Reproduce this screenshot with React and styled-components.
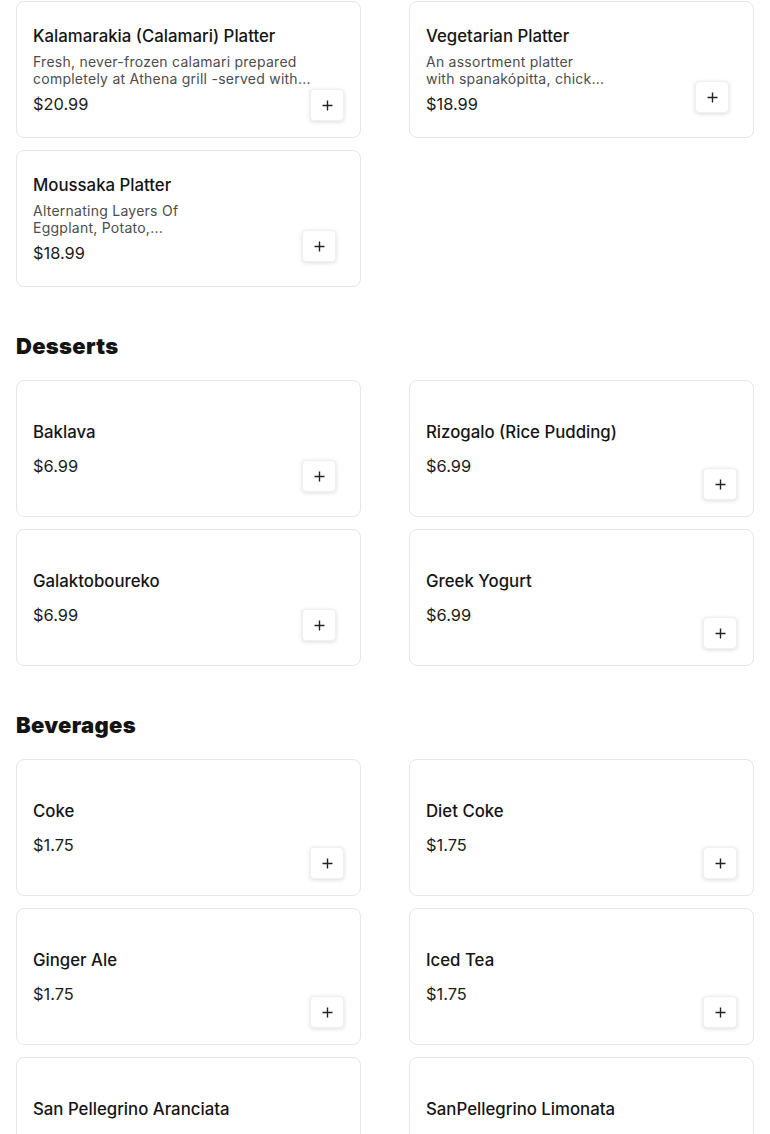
import React from 'react';
import styled, { createGlobalStyle } from 'styled-components';

const sections = [
  {
    id: 'platters',
    title: null,
    items: [
      {
        name: 'Kalamarakia (Calamari) Platter',
        desc: ['Fresh, never-frozen calamari prepared', 'completely at Athena grill -served with...'],
        price: '$20.99',
        inset: 17,
      },
      {
        name: 'Vegetarian Platter',
        desc: ['An assortment platter', 'with spanakópitta, chick...'],
        price: '$18.99',
        inset: 25,
      },
      {
        name: 'Moussaka Platter',
        desc: ['Alternating Layers Of', 'Eggplant, Potato,...'],
        price: '$18.99',
        inset: 25,
      },
    ],
  },
  {
    id: 'desserts',
    title: 'Desserts',
    items: [
      { name: 'Baklava', price: '$6.99', inset: 25 },
      { name: 'Rizogalo (Rice Pudding)', price: '$6.99', inset: 17 },
      { name: 'Galaktoboureko', price: '$6.99', inset: 25 },
      { name: 'Greek Yogurt', price: '$6.99', inset: 17 },
    ],
  },
  {
    id: 'beverages',
    title: 'Beverages',
    items: [
      { name: 'Coke', price: '$1.75', inset: 17 },
      { name: 'Diet Coke', price: '$1.75', inset: 17 },
      { name: 'Ginger Ale', price: '$1.75', inset: 17 },
      { name: 'Iced Tea', price: '$1.75', inset: 17 },
      { name: 'San Pellegrino Aranciata', price: '$1.75', inset: 17 },
      { name: 'SanPellegrino Limonata', price: '$1.75', inset: 17 },
    ],
  },
];

const PlusIcon = () => (
  <svg width="11" height="11" viewBox="0 0 11 11" fill="none">
    <path d="M5.5 0.5v10M0.5 5.5h10" stroke="#222" strokeWidth="1.4" />
  </svg>
);

const MenuItem = ({ item }) => (
  <Card>
    <Info>
      <ItemName>{item.name}</ItemName>
      {item.desc && (
        <Desc>
          {item.desc.map((line) => (
            <DescLine key={line}>{line}</DescLine>
          ))}
        </Desc>
      )}
      <Price>{item.price}</Price>
    </Info>
    <AddButton $inset={item.inset} aria-label={`Add ${item.name}`}>
      <PlusIcon />
    </AddButton>
  </Card>
);

const App = () => {
  return (
    <>
      <GlobalStyle />
      <Page>
        {sections.map((section) => (
          <Section key={section.id}>
            {section.title && <SectionTitle>{section.title}</SectionTitle>}
            <Grid>
              {section.items.map((item) => (
                <MenuItem item={item} key={item.name} />
              ))}
            </Grid>
          </Section>
        ))}
      </Page>
    </>
  );
};

//Styled Components
const GlobalStyle = createGlobalStyle`
  * {
    box-sizing: border-box;
  }
  body {
    margin: 0;
    background: #fff;
    font-family: Inter, 'Liberation Sans', sans-serif;
    color: #111;
  }
`;

const Page = styled.div`
  padding: 1px 16px 0;
`;

const Section = styled.section`
  & + & {
    margin-top: 46px;
  }
`;

const SectionTitle = styled.h2`
  margin: 0 0 21px;
  font-size: 22px;
  line-height: 26px;
  font-weight: 900;
  color: #141414;
  letter-spacing: 0.3px;
`;

const Grid = styled.div`
  display: grid;
  grid-template-columns: 1fr 1fr;
  column-gap: 48px;
  row-gap: 12px;
`;

const Card = styled.div`
  position: relative;
  height: 137px;
  display: flex;
  align-items: center;
  padding: 0 16px;
  border: 1px solid #e6e6e6;
  border-radius: 8px;
  background: #fff;
`;

const Info = styled.div`
  display: flex;
  flex-direction: column;
  min-width: 0;
  padding-top: 1px;
`;

const ItemName = styled.h3`
  margin: 0 0 6px;
  font-size: 16.8px;
  line-height: 22px;
  font-weight: 500;
  color: #151515;
  white-space: nowrap;
`;

const Desc = styled.div`
  font-size: 14px;
  line-height: 17px;
  font-weight: 400;
  color: #4d4d4d;
  letter-spacing: 0.25px;
`;

const DescLine = styled.div`
  white-space: nowrap;
`;

const Price = styled.div`
  margin-top: 6px;
  font-size: 16.4px;
  line-height: 22px;
  font-weight: 400;
  color: #1c1c1c;
`;

const AddButton = styled.button`
  position: absolute;
  right: ${(p) => p.$inset - 1}px;
  bottom: ${(p) => p.$inset - 1}px;
  width: 34px;
  height: 32px;
  display: flex;
  align-items: center;
  justify-content: center;
  padding: 0;
  border: 1px solid #f0f0f0;
  border-radius: 4px;
  background: #fff;
  box-shadow: 0 1px 4px rgba(0, 0, 0, 0.14);
  cursor: pointer;
`;

export default App;
